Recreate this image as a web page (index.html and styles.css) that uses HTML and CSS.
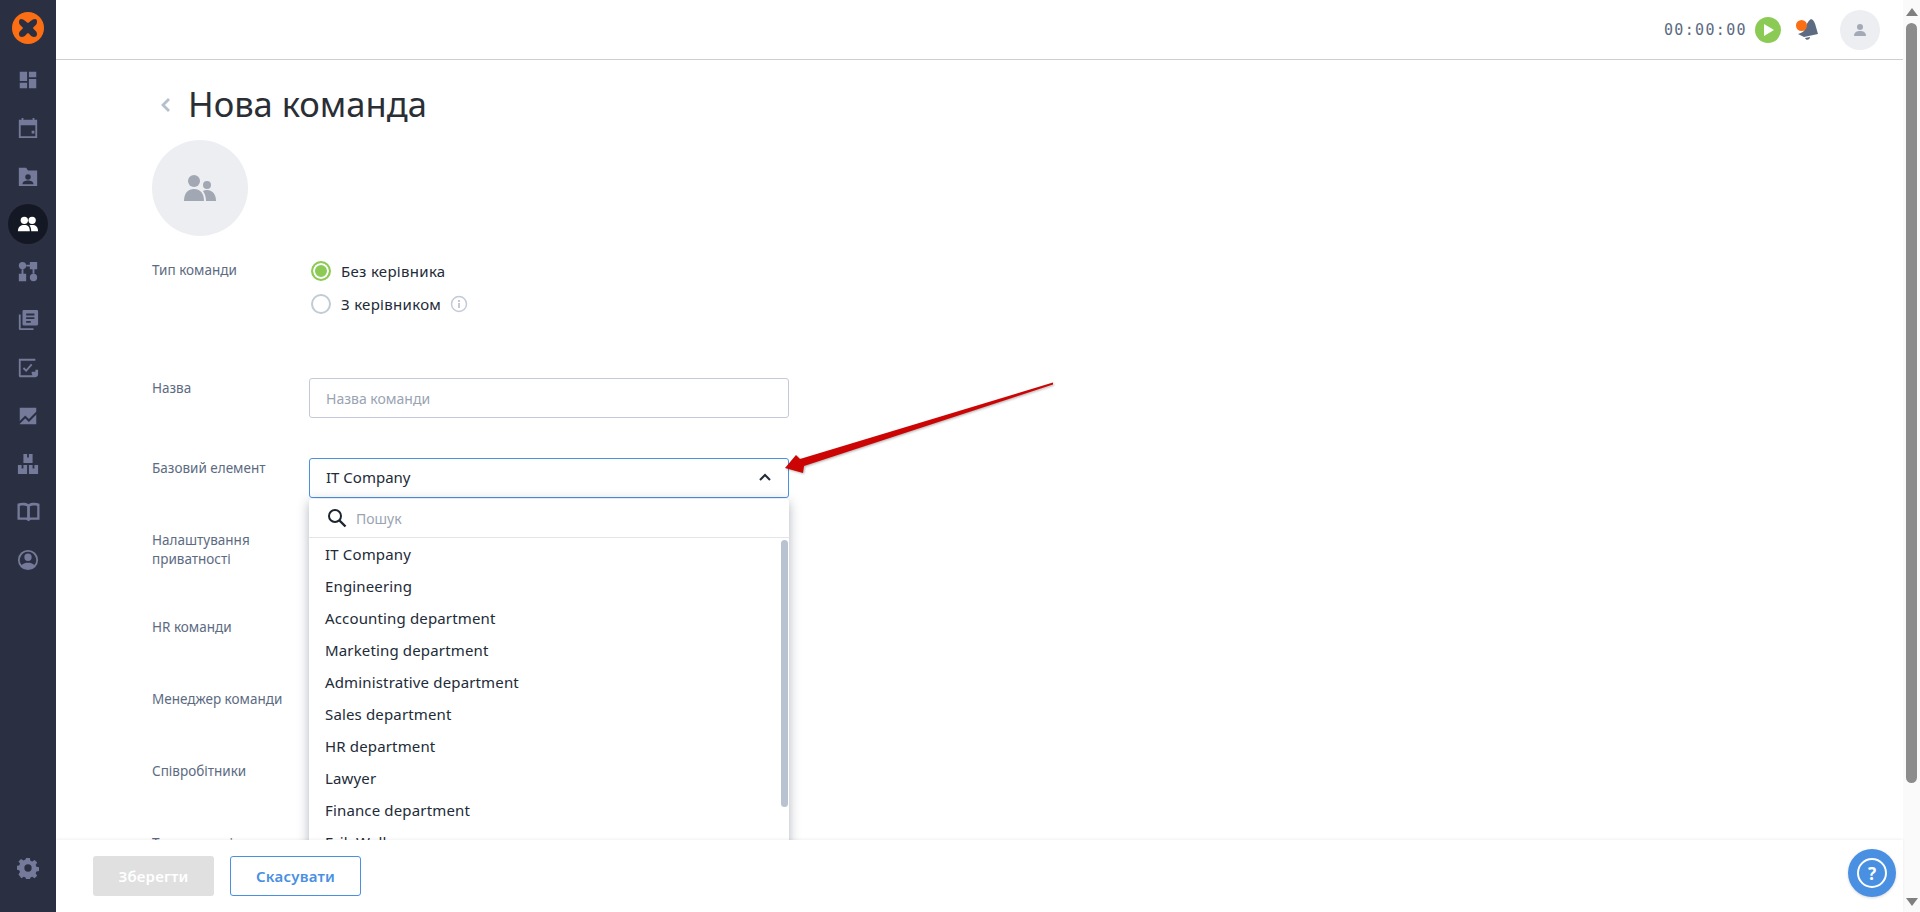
FILE: index.html
```html
<!DOCTYPE html>
<html lang="uk">
<head>
  <meta charset="UTF-8">
  <title>Нова команда</title>
  <link rel="stylesheet" href="styles.css">
</head>
<body>

  <nav class="sidebar">
    <div class="logo">
      <svg width="20" height="20" viewBox="0 0 20 20"><path fill="#2a3042" d="M3 1c3 0 5 3 7 4 2-1 4-4 7-4 2 0 2 2 2 3 0 3-3 4-4 6 1 2 4 3 4 6 0 2-1 3-3 3-3 0-4-3-6-4-2 1-3 4-6 4-2 0-3-1-3-3 0-3 3-4 4-6C4 8 1 7 1 4c0-2 1-3 2-3z"/></svg>
    </div>
    <a class="nav-item"><svg viewBox="0 0 24 24"><path d="M3 3h8v10H3zM13 3h8v6h-8zM13 11h8v10h-8zM3 15h8v6H3z"/></svg></a>
    <a class="nav-item"><svg viewBox="0 0 24 24"><path fill-rule="evenodd" d="M5 1h2v2h10V1h2v2h3v20H2V3h3zM4 9v12h16V9zm12 6h3v3h-3z"/></svg></a>
    <a class="nav-item"><svg viewBox="0 0 24 24"><path fill-rule="evenodd" d="M2 3h8l2 3h10v17H2zm10 7a3 3 0 100 6 3 3 0 000-6zm-6 11h12c0-3-3-4-6-4s-6 1-6 4z"/></svg></a>
    <a class="nav-item active"><svg viewBox="0 0 24 24"><circle cx="8" cy="8" r="4"/><circle cx="16.500" cy="8" r="4"/><path d="M1 20c0-5 3-7 7-7s6 2 6 7zM15.500 20c0-3-.5-5-2-6.500 1-.4 2-.5 3-.5 4 0 6.500 2 6.500 7z"/></svg></a>
    <a class="nav-item"><svg viewBox="0 0 24 24"><circle cx="6" cy="5" r="4"/><path d="M14 1h8v8h-8zM2 14h8v8H2zM10 4h4v2h-4zM5 9h2v5H5zM17 9h2v5h-2z"/><circle cx="18" cy="18" r="4"/></svg></a>
    <a class="nav-item"><svg viewBox="0 0 24 24"><path fill-rule="evenodd" d="M7 1h15l1 1v15l-1 1H7l-1-1V2zm3 4v2h9V5zm0 4v2h9V9zm0 4v2h5v-2z"/><path d="M2 6h2v15h14v2H3l-1-1z"/></svg></a>
    <a class="nav-item"><svg viewBox="0 0 24 24"><path fill-rule="evenodd" d="M2 2h18v12h3v5c0 2-2 3-3 3H3l-1-1zm2 2v16h13c-1-1-1-2-1-3v-1h4V4z"/><path fill="none" stroke="currentColor" stroke-width="2" d="M7 12l3 3 6-7"/></svg></a>
    <a class="nav-item"><svg viewBox="0 0 24 24"><path d="M3 3h18v18H3z"/><path fill="none" stroke="#2a3042" stroke-width="2.200" d="M2 20l7-7 4 4 9-9"/></svg></a>
    <a class="nav-item"><svg viewBox="0 0 24 24"><path fill-rule="evenodd" d="M7 1h4v4h2V1h4v10H7zM1 13h4v4h2v-4h4v10H1zM13 13h4v4h2v-4h4v10H13z"/></svg></a>
    <a class="nav-item nav-book"><svg viewBox="0 0 26 24"><path fill-rule="evenodd" d="M1 3c4-1.500 9-1.500 12 .5 3-2 8-2 12-.5v17.500H15.500L13 22l-2.500-1.500H1zm2.500 2.500v12.500h8V6c-2-1-5.500-1.300-8-.5zm11 .5v12h8V5.500c-2.500-.8-6-.5-8 .5z"/></svg></a>
    <a class="nav-item"><svg viewBox="0 0 24 24"><path fill-rule="evenodd" d="M12 1a11 11 0 110 22 11 11 0 010-22zm0 2a9 9 0 00-7 14.500C7 15.500 9.500 15 12 15s5 .5 7 2.500A9 9 0 0012 3zm0 2a4 4 0 110 8 4 4 0 010-8z"/></svg></a>
    <a class="nav-item settings"><svg viewBox="0 0 24 24"><path fill-rule="evenodd" d="M10 1h4l.6 3 2 .9 2.600-1.700 2.800 2.800-1.700 2.600.9 2 3 .6v4l-3 .6-.9 2 1.700 2.600-2.800 2.800-2.600-1.700-2 .9-.6 3h-4l-.6-3-2-.9-2.600 1.700L1.600 19l1.700-2.600-.9-2-3-.6v-4l3-.6.9-2L1.600 5 4.400 2.200 7 3.900l2-.9zm2 7a4 4 0 100 8 4 4 0 000-8z"/></svg></a>
  </nav>

  <div class="main">
    <header class="topbar">
      <span class="timer">00:00:00</span>
      <span class="play"><svg width="10" height="12" viewBox="0 0 10 12"><path fill="#fff" d="M0 0l10 6-10 6z"/></svg></span>
      <span class="bell">
        <svg width="22" height="22" viewBox="0 0 22 22"><path fill="#5c6b82" d="M15 0c3 1 4 4 5 8l2 7-14 3-6-3c3-1 6-2 7-5 1-4 3-8 6-10z"/><path fill="#5c6b82" d="M9 19l5-1c0 3-4 4-5 1z"/></svg>
        <i class="bell-dot"></i>
      </span>
      <span class="user">
        <svg width="14" height="14" viewBox="0 0 14 14"><circle cx="7" cy="4" r="3" fill="#a3a9b6"/><path fill="#a3a9b6" d="M1 13c0-4 3-5 6-5s6 1 6 5z"/></svg>
      </span>
    </header>

    <section class="content">
      <div class="title-row">
        <svg class="back" width="11" height="18" viewBox="0 0 11 18"><path fill="none" stroke="#b5bfcd" stroke-width="2.800" d="M9 3L3 9l6 6"/></svg>
        <h1>Нова команда</h1>
      </div>

      <div class="team-photo">
        <svg width="34" height="26" viewBox="0 0 34 26"><circle cx="11" cy="6" r="6" fill="#a1a7b3"/><circle cx="24" cy="10" r="4" fill="#a1a7b3"/><path fill="#a1a7b3" d="M1 26c0-8 4-12 10-12s10 4 10 12z"/><path fill="#a1a7b3" d="M23 26c0-4-1-7-3-10 1-1 3-1 4-1 6 0 9 5 9 11z"/></svg>
      </div>

      <div class="form-row row-type">
        <div class="label">Тип команди</div>
        <div class="radios">
          <label class="radio"><i class="dot on"></i>Без керівника</label>
          <label class="radio"><i class="dot"></i>З керівником <svg class="info" width="18" height="18" viewBox="0 0 18 18"><circle cx="9" cy="9" r="7.500" fill="none" stroke="#c3cad6" stroke-width="1.500"/><path fill="#c3cad6" d="M8 8h2v5H8zM8 5h2v2H8z"/></svg></label>
        </div>
      </div>

      <div class="form-row row-name">
        <div class="label">Назва</div>
        <div class="field placeholder">Назва команди</div>
      </div>

      <div class="form-row row-base">
        <div class="label">Базовий елемент</div>
        <div class="select-wrap">
          <div class="field selected">IT Company
            <svg width="12" height="8" viewBox="0 0 12 8"><path fill="none" stroke="#222b38" stroke-width="2" d="M1 7l5-5 5 5"/></svg>
          </div>
          <div class="dropdown">
            <div class="search">
              <svg width="20" height="20" viewBox="0 0 20 20"><circle cx="8" cy="8" r="6" fill="none" stroke="#1c2430" stroke-width="2"/><path stroke="#1c2430" stroke-width="2.400" d="M12.500 12.500l6 6"/></svg>
              Пошук
            </div>
            <ul class="options">
              <li>IT Company</li>
              <li>Engineering</li>
              <li>Accounting department</li>
              <li>Marketing department</li>
              <li>Administrative department</li>
              <li>Sales department</li>
              <li>HR department</li>
              <li>Lawyer</li>
              <li>Finance department</li>
              <li>Erik Waller</li>
            </ul>
            <i class="dd-thumb"></i>
          </div>
        </div>
      </div>

      <div class="form-row row-privacy"><div class="label">Налаштування<br>приватності</div></div>
      <div class="form-row row-std"><div class="label">HR команди</div></div>
      <div class="form-row row-std"><div class="label">Менеджер команди</div></div>
      <div class="form-row row-std"><div class="label">Співробітники</div></div>
      <div class="form-row row-std"><div class="label">Тип контактів</div></div>
    </section>

    <footer class="actions">
      <button class="btn btn-save">Зберегти</button>
      <button class="btn btn-cancel">Скасувати</button>
      <span class="help">
        <svg width="30" height="30" viewBox="0 0 30 30"><circle cx="15" cy="15" r="14" fill="none" stroke="#fff" stroke-width="2"/></svg>
        <b>?</b>
      </span>
    </footer>

    <svg class="arrow" width="280" height="100" viewBox="0 0 280 100"><path fill="#cc0404" d="M268 2.500L15 79l-4-4L0 88l18 5 1-7L268 4.500z"/></svg>
  </div>

  <div class="page-scroll">
    <i class="arr-up"></i>
    <i class="thumb"></i>
    <i class="arr-down"></i>
  </div>

</body>
</html>
```

FILE: styles.css
```css
* {
  box-sizing: border-box;
}
html, body {
  height: 100%;
}
body {
  margin: 0;
  display: flex;
  height: 912px;
  overflow: hidden;
  font-family: "Noto Sans", Roboto, sans-serif;
  font-size: 14px;
  color: #222b38;
  background-color: white;
}

/* left nav */
.sidebar {
  width: 56px;
  flex: none;
  background-color: #2a3042;
  display: flex;
  flex-direction: column;
  align-items: center;
  padding-top: 12px;
}
.logo {
  width: 32px;
  height: 32px;
  border-radius: 50%;
  background-color: #fb6e14;
  display: flex;
  align-items: center;
  justify-content: center;
  margin-bottom: 16px;
}
.nav-item {
  width: 40px;
  height: 40px;
  margin-bottom: 8px;
  border-radius: 50%;
  display: flex;
  align-items: center;
  justify-content: center;
  color: #767a9a;
}
.nav-item svg {
  width: 22px;
  height: 22px;
  fill: currentColor;
}
.nav-item.nav-book svg {
  width: 25px;
}
.nav-item.active {
  background-color: #141824;
  color: white;
}
.nav-item.settings {
  margin-top: auto;
  margin-bottom: 24px;
}

.main {
  flex: 1;
  min-width: 0;
  display: flex;
  flex-direction: column;
  position: relative;
}

/* top bar */
.topbar {
  height: 60px;
  flex: none;
  border-bottom: 1px solid #cfcfcf;
  display: flex;
  align-items: center;
  padding-right: 23px;
  justify-content: flex-end;
}
.timer {
  font-family: "DejaVu Sans Mono", monospace;
  font-size: 15px;
  letter-spacing: 1.350px;
  color: #5c6b82;
  margin-right: 8px;
}
.play {
  width: 26px;
  height: 26px;
  border-radius: 50%;
  background-color: #8bcb55;
  display: flex;
  align-items: center;
  justify-content: center;
  padding-left: 2px;
  margin-right: 15px;
}
.bell {
  position: relative;
  width: 24px;
  height: 26px;
  margin-right: 20px;
}
.bell svg {
  display: block;
  margin-top: 2px;
}
.bell-dot {
  position: absolute;
  left: 0;
  top: 3px;
  width: 11px;
  height: 11px;
  border-radius: 50%;
  background-color: #fb6e14;
}
.user {
  width: 40px;
  height: 40px;
  border-radius: 50%;
  background-color: #eceef2;
  display: flex;
  align-items: center;
  justify-content: center;
}

/* form */
.content {
  flex: 1;
  min-height: 0;
  overflow: hidden;
  padding-left: 96px;
}
.title-row {
  display: flex;
  align-items: center;
  height: 80px;
  padding-left: 8px;
  padding-top: 6px;
}
.back {
  margin-right: 17px;
  margin-top: 3px;
}
h1 {
  margin: 0;
  font-size: 34.500px;
  font-weight: 400;
  color: #2a2e35;
}
.team-photo {
  width: 96px;
  height: 96px;
  border-radius: 50%;
  background-color: #eceef2;
  display: flex;
  align-items: center;
  justify-content: center;
}
.form-row {
  display: flex;
}
.label {
  width: 157px;
  flex: none;
  font-size: 13.500px;
  line-height: 19px;
  color: #5c6b82;
}
.row-type {
  margin-top: 25px;
  height: 117px;
}
.radios {
  display: flex;
  flex-direction: column;
  gap: 13px;
  padding-left: 2px;
}
.radio {
  display: flex;
  align-items: center;
  height: 20px;
  font-size: 15px;
  letter-spacing: .3px;
}
.dot {
  width: 20px;
  height: 20px;
  border-radius: 50%;
  border: 2px solid #c3cad6;
  margin-right: 10px;
  flex: none;
}
.dot.on {
  border-color: #8bcb55;
  background-color: #8bcb55;
  box-shadow: inset 0 0 0 2px white;
}
.info {
  margin-left: 9px;
}
.row-name {
  height: 80px;
}
.row-name .label, .row-base .label {
  padding-top: 1px;
}
.field {
  width: 480px;
  height: 40px;
  border: 1px solid #c3cad6;
  border-radius: 3px;
  display: flex;
  align-items: center;
  padding-left: 16px;
  font-size: 15px;
}
.placeholder {
  font-size: 14px;
  color: #9aa3b2;
}
.row-base {
  height: 73px;
  position: relative;
}
.select-wrap {
  position: relative;
}
.selected {
  border-color: #4a90e2;
  justify-content: space-between;
  padding-right: 17px;
  padding-bottom: 2px;
}
.dropdown {
  position: absolute;
  z-index: 2;
  left: 0;
  top: 41px;
  width: 480px;
  height: 360px;
  overflow: hidden;
  background-color: white;
  box-shadow: 0 3px 12px rgba(30, 40, 60, 0.35);
  border-radius: 3px 3px 0 0;
}
.search {
  height: 39px;
  border-bottom: 1px solid #e3e5e9;
  display: flex;
  align-items: center;
  gap: 9px;
  padding-left: 18px;
  font-size: 14px;
  color: #9aa3b2;
}
.options {
  list-style: none;
  margin: 0;
  padding: 0;
}
.options li {
  height: 32px;
  line-height: 32px;
  padding-left: 16px;
  font-size: 15px;
  letter-spacing: .15px;
}
.dd-thumb {
  position: absolute;
  right: 1px;
  top: 41px;
  width: 7px;
  height: 267px;
  border-radius: 4px;
  background-color: #b9c2d0;
}
.row-privacy {
  height: 87px;
}
.row-std {
  height: 72px;
}

/* bottom */
.actions {
  height: 72px;
  flex: none;
  position: relative;
  z-index: 3;
  background-color: white;
  box-shadow: 0 -1px 3px rgba(0, 0, 0, 0.06);
  display: flex;
  align-items: center;
  gap: 16px;
  padding-left: 37px;
}
.btn {
  height: 40px;
  border-radius: 3px;
  font-family: inherit;
  font-size: 15px;
  font-weight: 600;
  letter-spacing: .2px;
}
.btn-save {
  width: 121px;
  background-color: #e0e0e0;
  border: none;
  color: white;
}
.btn-cancel {
  width: 131px;
  background-color: white;
  border: 1px solid #4a90e2;
  color: #4a90e2;
}
.help {
  position: absolute;
  right: 7px;
  top: 9px;
  width: 48px;
  height: 48px;
  border-radius: 50%;
  background-color: #4a90e2;
  box-shadow: 0 1px 3px rgba(0, 0, 0, 0.15);
  display: flex;
  align-items: center;
  justify-content: center;
  color: white;
  font-size: 17px;
}
.help svg {
  position: absolute;
  left: 9px;
  top: 9px;
}
.arrow {
  position: absolute;
  left: 729px;
  top: 380px;
  z-index: 4;
  filter: drop-shadow(1px 1px 1px rgba(0, 0, 0, 0.3));
}

/* page scrollbar */
.page-scroll {
  width: 17px;
  flex: none;
  background-color: #fafafa;
  display: flex;
  flex-direction: column;
  align-items: center;
  padding: 8px 0 6px;
}
.page-scroll .thumb {
  width: 11px;
  height: 760px;
  border-radius: 6px;
  background-color: #8c8c8c;
  margin-top: 7px;
}
.arr-up, .arr-down {
  width: 0;
  height: 0;
  border-left: 6px solid transparent;
  border-right: 6px solid transparent;
}
.arr-up {
  border-bottom: 8px solid #7f7f7f;
}
.arr-down {
  border-top: 8px solid #7f7f7f;
  margin-top: auto;
}
```
